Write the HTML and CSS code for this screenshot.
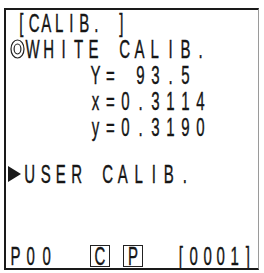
FILE: index.html
```html
<!DOCTYPE html>
<html lang="en">
<head>
    <meta charset="UTF-8">
    <meta name="viewport" content="width=device-width, initial-scale=1.0">
    <title>Calibration</title>
    <link rel="stylesheet" href="styles.css">
</head>
<body>
    <div class="screen">
        <!-- menu title -->
        <div class="line title">
            <span class="cell">[</span><span class="cell">C</span><span class="cell">A</span><span class="cell">L</span><span class="cell">I</span><span class="cell">B</span><span class="cell">.</span><span class="cell"></span><span class="cell">]</span>
        </div>
        <!-- selected item -->
        <div class="line item">
            <span class="cell icon">
                <svg width="15" height="20" viewBox="0 0 15 20"><ellipse cx="7.5" cy="10" rx="6.5" ry="9" fill="none" stroke="#222" stroke-width="1.2"/><ellipse cx="7.5" cy="10" rx="3.4" ry="5" fill="none" stroke="#222" stroke-width="1.2"/></svg>
            </span><span class="cell">W</span><span class="cell">H</span><span class="cell">I</span><span class="cell">T</span><span class="cell">E</span><span class="cell"></span><span class="cell">C</span><span class="cell">A</span><span class="cell">L</span><span class="cell">I</span><span class="cell">B</span><span class="cell">.</span>
        </div>
        <!-- measured values -->
        <div class="line value">
            <span class="cell">Y</span><span class="cell">=</span><span class="cell"></span><span class="cell">9</span><span class="cell">3</span><span class="cell">.</span><span class="cell">5</span>
        </div>
        <div class="line value">
            <span class="cell">x</span><span class="cell">=</span><span class="cell">0</span><span class="cell">.</span><span class="cell">3</span><span class="cell">1</span><span class="cell">1</span><span class="cell">4</span>
        </div>
        <div class="line value">
            <span class="cell">y</span><span class="cell">=</span><span class="cell">0</span><span class="cell">.</span><span class="cell">3</span><span class="cell">1</span><span class="cell">9</span><span class="cell">0</span>
        </div>
        <!-- cursor item -->
        <div class="line item cursor">
            <span class="cell icon">
                <svg width="15" height="18" viewBox="0 0 15 18"><polygon points="1,1 14,9 1,17" fill="#1a1a1a"/></svg>
            </span><span class="cell">U</span><span class="cell">S</span><span class="cell">E</span><span class="cell">R</span><span class="cell"></span><span class="cell">C</span><span class="cell">A</span><span class="cell">L</span><span class="cell">I</span><span class="cell">B</span><span class="cell">.</span>
        </div>
        <!-- status bar -->
        <div class="line status">
            <span class="cell">P</span><span class="cell">0</span><span class="cell">0</span>
            <span class="key key-c"><span class="cell">C</span></span>
            <span class="key key-p"><span class="cell">P</span></span>
            <span class="counter">
                <span class="cell">[</span><span class="cell">0</span><span class="cell">0</span><span class="cell">0</span><span class="cell">1</span><span class="cell">]</span>
            </span>
        </div>
    </div>
</body>
</html>
```

FILE: styles.css
```css
body {
    margin: 0;
    background: #fff;
}
.screen {
    margin: 8px 0 0 4px;
    width: 252px;
    height: 258px;
    border-top: 2px solid #1a1a1a;
    border-left: 2px solid #1a1a1a;
    border-bottom: 2px solid #1a1a1a;
    border-right: 1px solid #9a9a9a;
    overflow: hidden;
    font-family: "Liberation Sans", Arial, sans-serif;
    font-size: 25px;
    color: #151515;
}
.line {
    display: flex;
    align-items: center;
    height: 26px;
    line-height: 26px;
}
.cell {
    display: inline-flex;
    justify-content: center;
    flex: none;
    width: 15px;
    transform: scaleX(.6);
    -webkit-text-stroke: .4px #151515;
}
.icon {
    transform: none;
    align-items: center;
}

.title {
    margin-left: 9px;
}
.title .cell {
    width: 12.5px;
}
.item {
    margin-left: 4px;
}
.item .cell {
    width: 15.25px;
}
.value {
    margin-left: 82px;
}
.cursor {
    margin-top: 21px;
    margin-left: 1px;
}
.cursor .cell {
    width: 15.45px;
}
.status {
    margin-top: 56px;
    margin-left: 2px;
}
.status .cell {
    width: 15.25px;
}
.key {
    display: flex;
    justify-content: center;
    width: 18px;
    height: 20px;
    line-height: 20px;
    border: 1px solid #222;
}
.key .cell {
    width: 18px;
}
.key-c {
    margin-left: 36px;
}
.key-p {
    margin-left: 13px;
}
.counter {
    display: flex;
    margin-left: 31px;
}
.counter .cell {
    width: 13.5px;
}
```
